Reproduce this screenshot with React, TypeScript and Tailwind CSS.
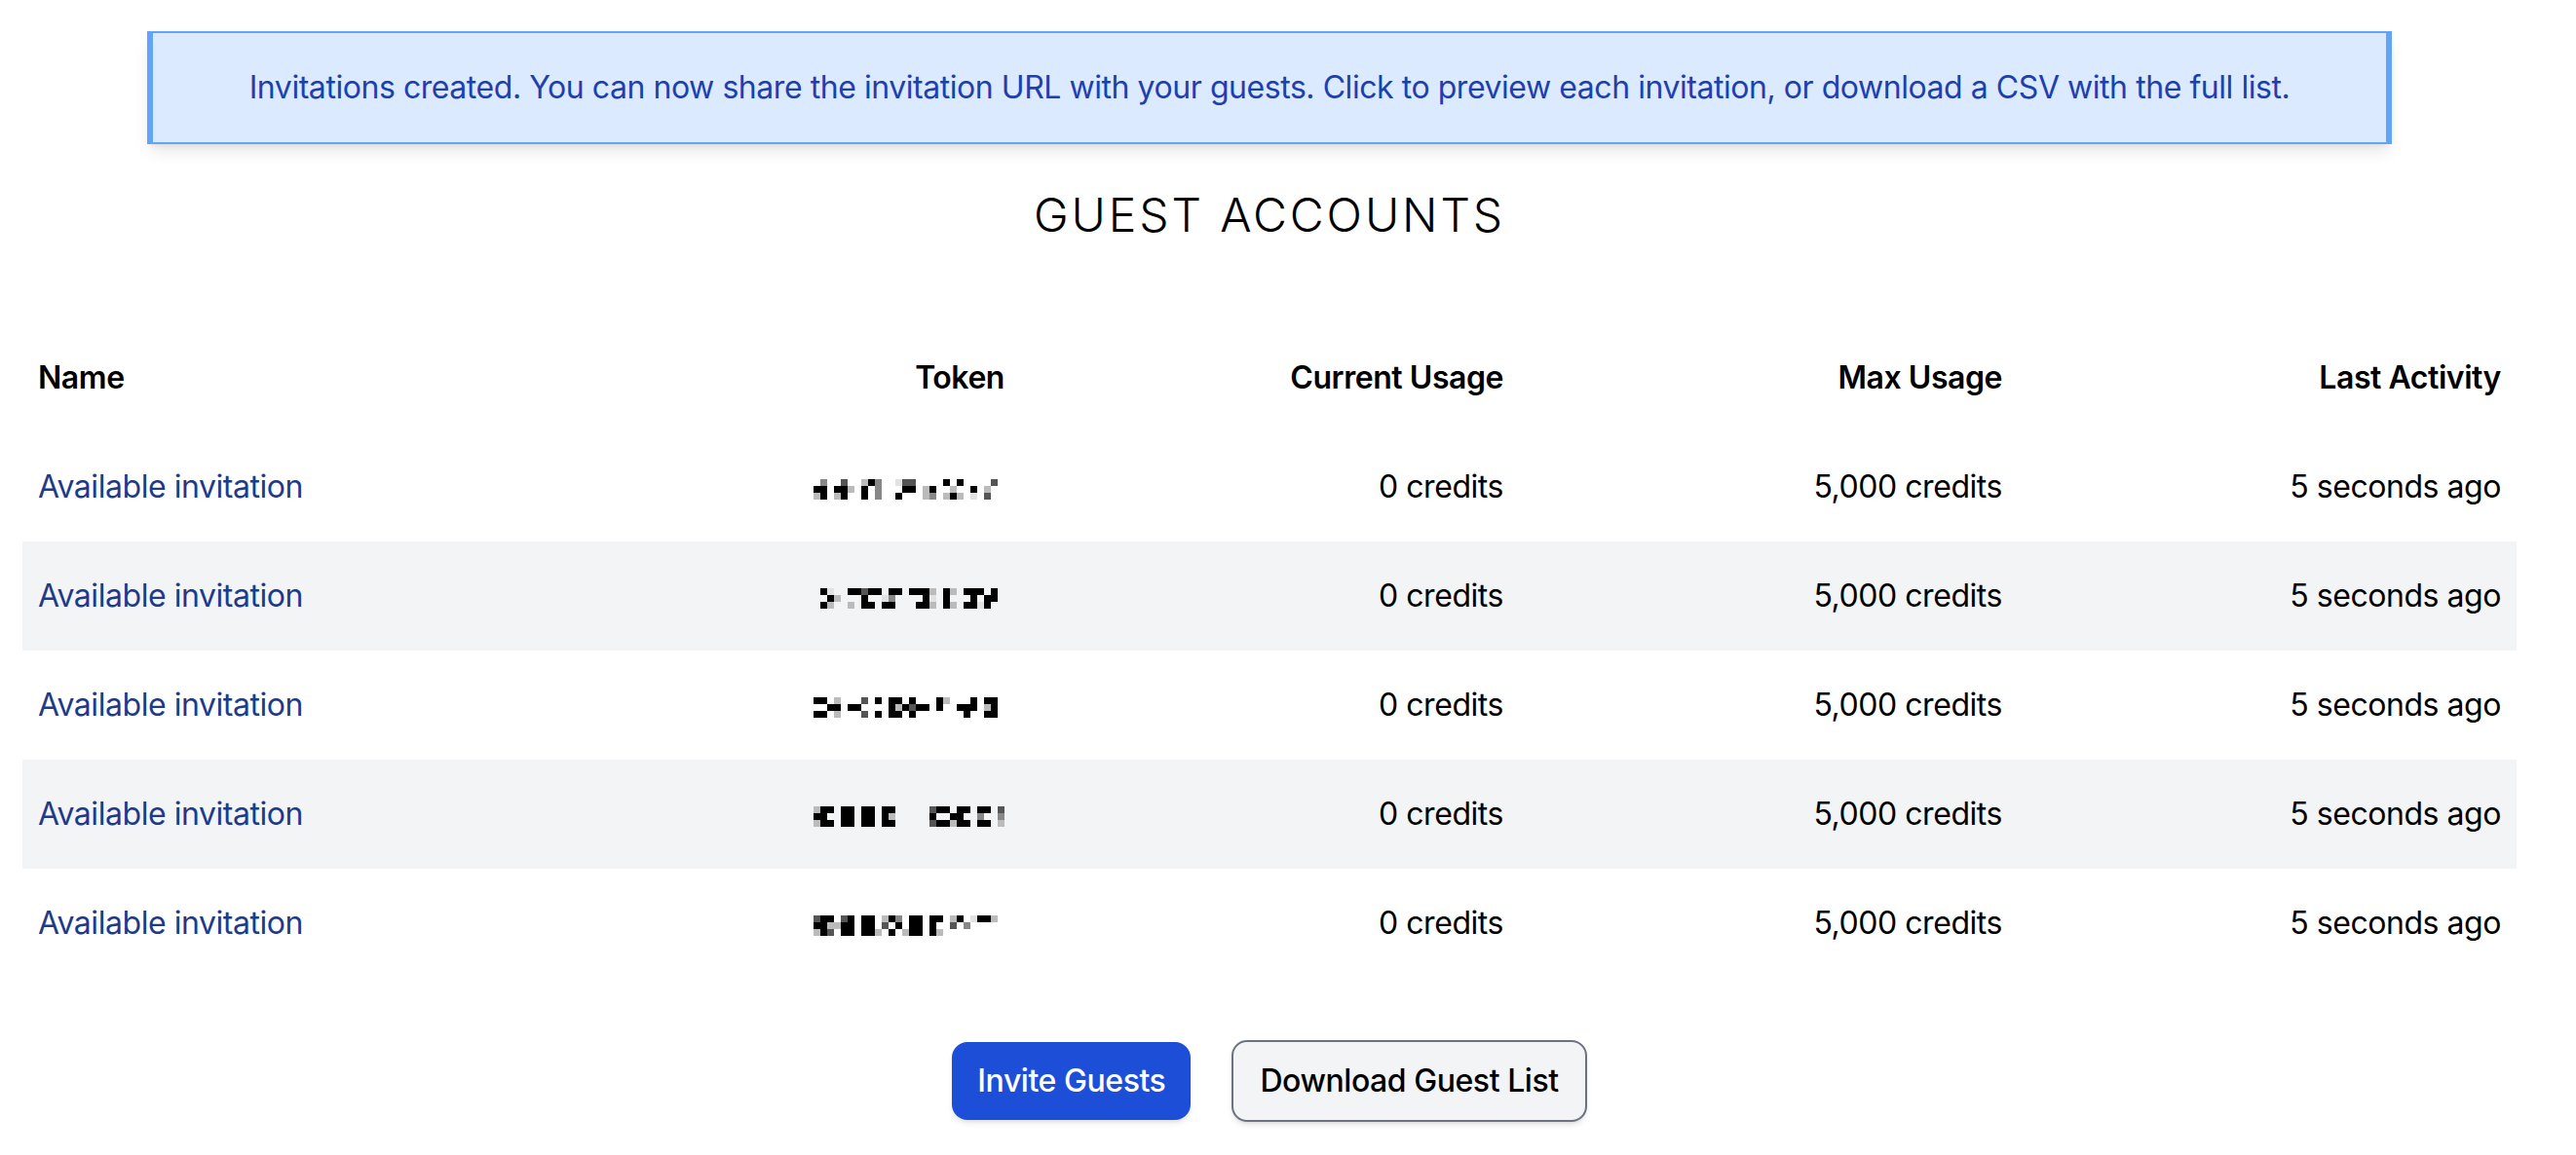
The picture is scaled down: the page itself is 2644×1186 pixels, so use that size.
import React from "react";

const shade: Record<string, string> = {
  "#": "#000000",
  d: "#555555",
  g: "#888888",
  l: "#bbbbbb",
  w: "#e2e2e2",
};

const tokens: string[][] = [
  [
    ".g..d..l#g..wdd....#.#....d.",
    "##.##l.#.g...##.l#..l..#.l..",
    "l#.l#..#.g..#...lg.l#l.w.d..",
  ],
  [
    ".#w..##d##.##.###l.#l.###.#.",
    "..#l...#..wg....#w.#...#.##.",
    ".#l..l.##.##...##l.#l.##w#..",
  ],
  [
    "##.l...d.#.##.#...#l...#.##.",
    "..##.##....#l#d##.#..###.l#.",
    "##.l...d.#.##.#.......#..##.",
  ],
  [
    "l##.##.##.##.....d##.##.##.d",
    "##..##.##.#l.....#..##..g..g",
    "l##.##.##.##.....d##l##.##.l",
  ],
  [
    "d##.d#.##.l#g.##.##.l#.w##l.",
    "##ll##.##.d.#.##.#..d.g....",
    "l#d.##.##l.#.l##.#l........",
  ],
];

function Token({ rows }: { rows: string[] }) {
  const cell = 7;
  const cols = Math.max(...rows.map((r) => r.length));
  return (
    <svg
      width={cols * cell}
      height={rows.length * cell}
      viewBox={`0 0 ${cols * cell} ${rows.length * cell}`}
      className="inline-block align-middle"
    >
      {rows.flatMap((r, y) =>
        r.split("").map((c, x) =>
          shade[c] ? (
            <rect
              key={`${x}-${y}`}
              x={x * cell}
              y={y * cell}
              width={cell}
              height={cell}
              fill={shade[c]}
            />
          ) : null
        )
      )}
    </svg>
  );
}

export default function App() {
  const font = { fontFamily: "Inter, 'Noto Sans', sans-serif" };
  return (
    <div className="w-full min-h-[1186px] bg-white text-black tracking-[-0.028em]" style={font}>
      <div className="ml-[23px] w-[2560px] pt-[32px]">
        <div className="mx-auto w-[90%] border-x-[6px] border-y-2 border-[#60a5fa] bg-[#dbeafe] py-[32px] text-center text-[32px] leading-[48px] text-[#1e40af] shadow-lg">
          Invitations created. You can now share the invitation URL with your guests. Click to preview each invitation, or download a CSV with the full list.
        </div>
        <h1 className="mt-[41px] text-center text-[48px] leading-[64px] font-light tracking-[0.06em]">
          GUEST ACCOUNTS
        </h1>
        <table className="mt-[79px] w-full table-fixed border-collapse text-[32px] leading-[48px]">
          <thead>
            <tr className="font-semibold">
              <th className="px-[16px] py-[32px] text-left font-semibold">Name</th>
              <th className="px-[16px] py-[32px] text-right font-semibold">Token</th>
              <th className="px-[16px] py-[32px] text-right font-semibold">Current Usage</th>
              <th className="px-[16px] py-[32px] text-right font-semibold">Max Usage</th>
              <th className="px-[16px] py-[32px] text-right font-semibold">Last Activity</th>
            </tr>
          </thead>
          <tbody>
            {tokens.map((t, i) => (
              <tr key={i} className={i % 2 === 1 ? "bg-[#f3f4f6]" : ""}>
                <td className="px-[16px] py-[32px] text-left text-[#1e3a8a]">Available invitation</td>
                <td className="px-[16px] py-[32px] text-right">
                  <Token rows={t} />
                </td>
                <td className="px-[16px] py-[32px] text-right">0 credits</td>
                <td className="px-[16px] py-[32px] text-right">5,000 credits</td>
                <td className="px-[16px] py-[32px] text-right">5 seconds ago</td>
              </tr>
            ))}
          </tbody>
        </table>
        <div className="mt-[64px] flex items-center justify-center gap-[42px]">
          <button className="rounded-[16px] bg-[#1d4ed8] px-[26px] py-[16px] text-[32px] leading-[48px] font-medium text-white shadow-md">
            Invite Guests
          </button>
          <button className="rounded-[16px] border-2 border-[#6b7280] bg-[#f3f4f6] px-[27px] py-[16px] text-[32px] leading-[48px] font-medium text-black shadow-md">
            Download Guest List
          </button>
        </div>
      </div>
    </div>
  );
}
